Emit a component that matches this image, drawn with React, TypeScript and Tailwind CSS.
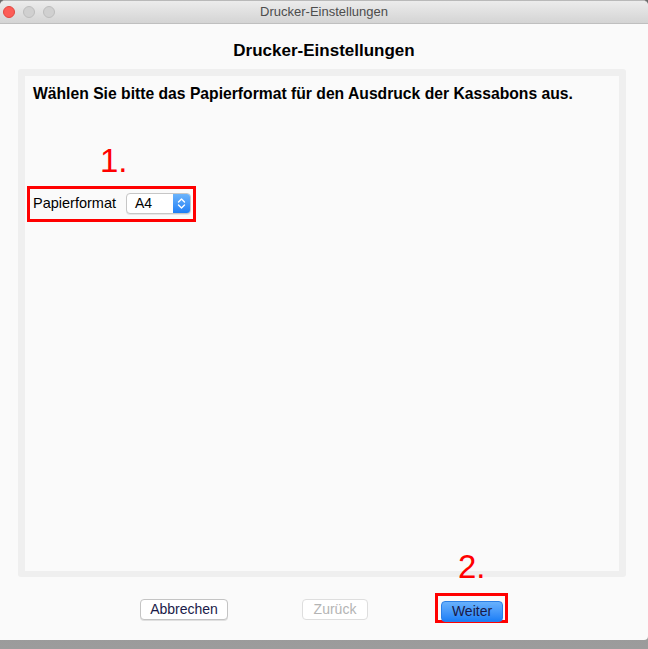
import React from "react";

const font = { fontFamily: '"Liberation Sans", Arial, sans-serif' };

function Stepper() {
  return (
    <svg width="9" height="13" viewBox="0 0 9 13" fill="none">
      <path d="M1.5 5 L4.5 2 L7.5 5" stroke="white" strokeWidth="1.4" strokeLinecap="round" strokeLinejoin="round" />
      <path d="M1.5 8 L4.5 11 L7.5 8" stroke="white" strokeWidth="1.4" strokeLinecap="round" strokeLinejoin="round" />
    </svg>
  );
}

export default function App() {
  return (
    <div
      className="w-[648px] h-[649px] flex flex-col bg-gradient-to-b from-[#6a6a6a] to-[#9c9c9c] overflow-hidden"
      style={font}
    >
      {/* ========================
          WINDOW
      ======================== */}
      <div className="relative h-[640px] flex flex-col bg-[#fafafa] rounded-t-[5px] rounded-br-[4px] border-t border-[#b9b9b9]">
        {/* title bar */}
        <div className="h-[23px] flex items-center relative bg-gradient-to-b from-[#ececec] to-[#d4d4d4] border-b border-[#bfbfbf] rounded-t-[5px]">
          <div className="flex gap-[8px] pl-[3px]">
            <span className="w-[12px] h-[12px] rounded-full bg-[#fc5d57] border border-[#e2463f]" />
            <span className="w-[12px] h-[12px] rounded-full bg-[#d0d0d0] border border-[#bdbdbd]" />
            <span className="w-[12px] h-[12px] rounded-full bg-[#d0d0d0] border border-[#bdbdbd]" />
          </div>
          <div className="absolute inset-0 flex items-center justify-center text-[13px] text-[#4d4d4d]">
            Drucker-Einstellungen
          </div>
        </div>

        {/* heading */}
        <div className="h-[45px] pt-[17px] text-center text-[17px] leading-[20px] font-bold text-black">
          Drucker-Einstellungen
        </div>

        {/* panel */}
        <div className="mx-[18px] w-[608px] h-[508px] bg-[#efefef] rounded-[3px] pt-[7px] px-[7px] pb-[6px]">
          <div className="h-full bg-[#fafafa] flex flex-col">
            <p className="pl-[8px] pt-[9px] text-[15.7px] leading-[18px] font-bold text-black">
              Wählen Sie bitte das Papierformat für den Ausdruck der Kassabons aus.
            </p>

            <div className="ml-[75px] mt-[41px] text-[33px] leading-[33px] font-light text-[#ff0000]">
              1.
            </div>

            {/* paper format row */}
            <div className="ml-[2px] mt-[9px] w-[169px] h-[36px] border-[3px] border-[#ff0000] flex items-start pt-[4px] pl-[3px]">
              <span className="text-[14.5px] leading-[21px] text-black">Papierformat</span>
              <div className="ml-[10px] w-[65px] h-[21px] flex bg-white border border-[#c6c6c6] rounded-[4px] shadow-[0_1px_0_rgba(0,0,0,0.08)] overflow-hidden">
                <span className="flex-1 pl-[8px] text-[14px] leading-[19px] text-black">A4</span>
                <span className="w-[17px] flex items-center justify-center bg-gradient-to-b from-[#6bb4fb] to-[#1c7ef5]">
                  <Stepper />
                </span>
              </div>
            </div>
          </div>
        </div>

        {/* buttons */}
        <div className="flex items-start mt-[16px]">
          <button className="ml-[140px] mt-[6px] w-[88px] h-[21px] bg-white border border-[#c4c4c4] rounded-[4px] shadow-[0_1px_0_rgba(0,0,0,0.1)] text-[14px] leading-[19px] text-[#1a1a48]">
            Abbrechen
          </button>
          <button className="ml-[74px] mt-[6px] w-[66px] h-[21px] bg-white border border-[#dedede] rounded-[4px] text-[14px] leading-[19px] text-[#b4b4b4]">
            Zurück
          </button>
          <div className="ml-[67px] w-[73px] h-[30px] border-[3px] border-[#ff0000] pt-[3px] pl-[3px]">
            <button className="w-[62px] h-[21px] rounded-[4px] bg-gradient-to-b from-[#68b1fc] to-[#1a7ff7] border border-[#2b7fe6] text-[14px] leading-[19px] text-[#1a1a48]">
              Weiter
            </button>
          </div>
        </div>

        {/* annotation 2. */}
        <div className="absolute left-[458px] top-[549px] text-[33px] leading-[33px] font-light text-[#ff0000]">
          2.
        </div>
      </div>
    </div>
  );
}
